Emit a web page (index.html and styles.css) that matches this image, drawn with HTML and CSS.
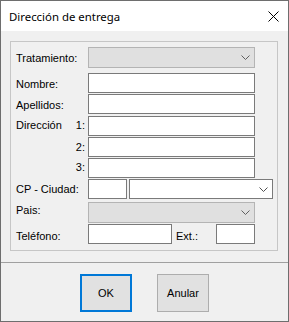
FILE: index.html
```html
<!DOCTYPE html>
<html lang="es">
<head>
<meta charset="utf-8">
<title>Dirección de entrega</title>
<link rel="stylesheet" href="styles.css">
</head>
<body>
<div class="window">
  <div class="titlebar">
    <span class="title">Dirección de entrega</span>
    <svg class="close" width="11" height="11" viewBox="0 0 11 11"><path d="M0.5 0.5 L10.5 10.5 M10.5 0.5 L0.5 10.5" stroke="#000" stroke-width="1" fill="none"/></svg>
  </div>
  <div class="body">
    <div class="group">
      <div class="row tall">
        <span class="lbl lbl-lo">Tratamiento:</span>
        <div class="field combo disabled w-full"><svg class="chev" width="9" height="5" viewBox="0 0 9 5"><path d="M0.5 0.5 L4.5 4.5 L8.5 0.5" stroke="#606060" fill="none"/></svg></div>
      </div>
      <div class="row gap-nombre">
        <span class="lbl lbl-lo">Nombre:</span>
        <div class="field w-full"></div>
      </div>
      <div class="row">
        <span class="lbl lbl-lo">Apellidos:</span>
        <div class="field w-full"></div>
      </div>
      <div class="row gap-dir">
        <span class="lbl lbl-hi split"><span>Dirección</span><span>1:</span></span>
        <div class="field w-full"></div>
      </div>
      <div class="row">
        <span class="lbl right">2:</span>
        <div class="field w-full"></div>
      </div>
      <div class="row">
        <span class="lbl lbl-hi right">3:</span>
        <div class="field w-full"></div>
      </div>
      <div class="row">
        <span class="lbl">CP - Ciudad:</span>
        <div class="field w-cp"></div>
        <div class="field combo w-city"><svg class="chev" width="9" height="5" viewBox="0 0 9 5"><path d="M0.5 0.5 L4.5 4.5 L8.5 0.5" stroke="#505050" fill="none"/></svg></div>
      </div>
      <div class="row tall gap-pais">
        <span class="lbl lbl-top">Pais:</span>
        <div class="field combo disabled w-full"><svg class="chev" width="9" height="5" viewBox="0 0 9 5"><path d="M0.5 0.5 L4.5 4.5 L8.5 0.5" stroke="#606060" fill="none"/></svg></div>
      </div>
      <div class="row">
        <span class="lbl lbl-low">Teléfono:</span>
        <div class="field w-tel"></div>
        <span class="lbl lbl-low ext">Ext.:</span>
        <div class="field w-cp"></div>
      </div>
    </div>
  </div>
  <div class="footer">
    <button class="btn btn-default">OK</button>
    <button class="btn">Anular</button>
  </div>
</div>
</body>
</html>
```
FILE: styles.css
```css
* { box-sizing: border-box; }
html, body { margin: 0; padding: 0; background: #f0f0f0; }
body { font-family: "Liberation Sans", Arial, sans-serif; font-size: 11px; color: #000; }

.window {
  width: 289px;
  height: 322px;
  border: 1px solid #6e6e6e;
  background: #f0f0f0;
  display: flex;
  flex-direction: column;
}

.titlebar {
  height: 30px;
  flex: none;
  background: #fff;
  display: flex;
  align-items: center;
  padding-left: 8px;
  padding-right: 9px;
}
.title {
  font-family: "Noto Sans", "Liberation Sans", sans-serif;
  font-size: 11.4px;
  color: #000;
}
.close { margin-left: auto; display: block; }

.body { padding: 10px 10px 11px 9px; flex: none; }

.group {
  border: 1px solid #c6c6c6;
  height: 210px;
  padding: 5px 0 0 5px;
  display: flex;
  flex-direction: column;
  gap: 1px;
}

.row { display: flex; align-items: flex-start; height: 20px; flex: none; }
.row.tall { height: 21px; }
.gap-nombre { margin-top: 4px; }
.gap-dir { margin-top: 1px; }
.gap-pais { margin-top: 2px; }

.lbl {
  width: 72px;
  flex: none;
  padding-top: 4px;
  line-height: 12px;
  white-space: nowrap;
}
.lbl-lo { padding-top: 5px; }
.lbl-hi { padding-top: 3px; }
.lbl-top { padding-top: 2px; }
.lbl-low { padding-top: 6px; }
.lbl.split { display: flex; justify-content: space-between; padding-right: 3px; }
.lbl.right { text-align: right; padding-right: 3px; }
.lbl.ext { width: 40px; margin-left: 4px; }

.field {
  height: 100%;
  flex: none;
  border: 1px solid #7a7a7a;
  background: #fff;
}
.combo {
  display: flex;
  align-items: center;
  justify-content: flex-end;
  padding-right: 4px;
}
.combo.disabled { background: #e0e0e0; border-color: #b4b4b4; }
.chev { display: block; }

.w-full { width: 167px; }
.w-cp { width: 39px; }
.w-city { width: 144px; margin-left: 2px; padding-right: 4px; }
.w-tel { width: 84px; }

.footer {
  border-top: 1px solid #a0a0a0;
  padding-top: 11px;
  display: flex;
  justify-content: center;
  gap: 25px;
}
.btn {
  width: 52px;
  height: 38px;
  background: #e1e1e1;
  border: 1px solid #adadad;
  font-family: "Liberation Sans", Arial, sans-serif;
  font-size: 11px;
  color: #000;
  padding: 0;
  margin: 0;
}
.btn-default { border: 2px solid #0078d7; }
```
